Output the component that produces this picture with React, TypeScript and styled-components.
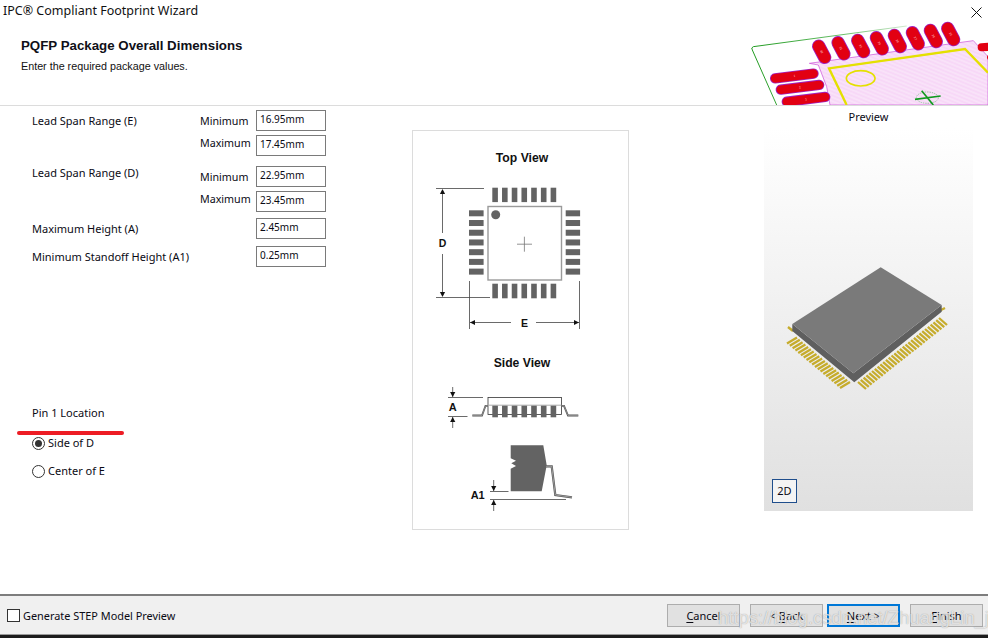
import React from 'react'
import styled, { createGlobalStyle } from 'styled-components'

const GlobalStyle = createGlobalStyle`
  html, body { margin: 0; padding: 0; background: #fff; }
  * { box-sizing: border-box; }
`

const Wizard = styled.div`
  position: relative;
  width: 988px;
  height: 638px;
  display: flex;
  flex-direction: column;
  overflow: hidden;
  background: #fff;
  color: #0a0a14;
  font-family: "Noto Sans", sans-serif;
  font-size: 11px;
`

const Header = styled.header`
  position: relative;
  height: 106px;
  flex: none;
  border-bottom: 1px solid #dcdcdc;
  overflow: hidden;
`

const WindowTitle = styled.div`
  padding: 2px 0 0 3px;
  height: 21px;
  font-size: 12.5px;
  line-height: 18px;
  color: #111;
`

const Heading = styled.h1`
  margin: 17px 0 0 21px;
  font: bold 13.3px/16px "Liberation Sans", Arial, sans-serif;
  color: #101018;
`

const SubHeading = styled.p`
  margin: 6px 0 0 21px;
  font: 10.75px/13px "Liberation Sans", Arial, sans-serif;
  color: #111;
`

const CloseButton = styled.svg`
  position: absolute;
  top: 7px;
  right: 6px;
  width: 11px;
  height: 11px;
`

const HeaderArt = styled.svg`
  position: absolute;
  top: 0;
  right: 0;
  width: 288px;
  height: 105px;
`

const Body = styled.main`
  flex: 1;
  display: grid;
  grid-template-columns: 412px 352px 224px;
  min-height: 0;
`

const FormColumn = styled.section`
  display: flex;
  flex-direction: column;
  padding: 4px 0 0 32px;
`

const Field = styled.div<{ $gap: number }>`
  display: grid;
  grid-template-columns: 168px 56px 70px;
  height: 21px;
  margin-bottom: ${({ $gap }) => $gap}px;
  align-items: center;
  line-height: 14px;
`

const FieldLabel = styled.span<{ $up?: number }>`
  grid-column: 1;
  white-space: nowrap;
  transform: translateY(${({ $up }) => -($up ?? 0)}px);
`

const BoundLabel = styled.span<{ $up?: number }>`
  grid-column: 2;
  font-size: 10.7px;
  white-space: nowrap;
  transform: translateY(${({ $up }) => -($up ?? 0)}px);
`

const ValueBox = styled.div`
  grid-column: 3;
  height: 21px;
  border: 1px solid #7a7a7a;
  padding-left: 3px;
  font-size: 10px;
  line-height: 17px;
  background: #fff;
`

const PinSection = styled.div`
  display: flex;
  flex-direction: column;
  margin-top: 139px;
`

const PinTitle = styled.div`
  line-height: 14px;
  margin-bottom: 16px;
`

const RadioRow = styled.label`
  display: flex;
  align-items: center;
  gap: 3px;
  height: 14px;
  margin-bottom: 14px;
  line-height: 14px;
`

const RadioDot = styled.span<{ $checked?: boolean }>`
  width: 13px;
  height: 13px;
  border-radius: 50%;
  border: 1px solid #333;
  display: flex;
  align-items: center;
  justify-content: center;
  &::after {
    content: '';
    width: 7px;
    height: 7px;
    border-radius: 50%;
    background: ${({ $checked }) => ($checked ? '#333' : 'transparent')};
  }
`

const RedMark = styled.div`
  position: absolute;
  left: 17px;
  top: 431px;
  width: 107px;
  height: 4px;
  border-radius: 2px;
  background: #ed1c24;
`

const DiagramColumn = styled.section`
  padding-top: 24px;
`

const DiagramCard = styled.svg`
  display: block;
  width: 217px;
  height: 400px;
  border: 1px solid #dcdcdc;
`

const PreviewColumn = styled.section`
  display: flex;
  flex-direction: column;
`

const PreviewTitle = styled.div`
  width: 209px;
  text-align: center;
  line-height: 14px;
  padding-top: 4px;
  height: 22px;
`

const PreviewPane = styled.div`
  position: relative;
  width: 209px;
  height: 383px;
  background: linear-gradient(#ffffff 0%, #e0e0e0 100%);
`

const ChipArt = styled.svg`
  display: block;
  width: 209px;
  height: 383px;
`

const ToggleButton = styled.div`
  position: absolute;
  left: 8px;
  bottom: 8px;
  width: 25px;
  height: 24px;
  border: 1px solid #1f4e8c;
  background: #f4f4f4;
  text-align: center;
  line-height: 22px;
`

const Footer = styled.footer`
  flex: none;
  height: 44px;
  margin-top: -1px;
  display: flex;
  align-items: center;
  justify-content: space-between;
  padding: 0 5px 0 7px;
  background: #f0f0f0;
  border-top: 2px solid #7d7d7d;
  border-bottom: 3px solid #1c1c1c;
  box-shadow: inset 0 -1px 0 #9a9a9a;
`

const StepOption = styled.label`
  display: flex;
  align-items: center;
  gap: 3px;
  font-size: 10.9px;
  line-height: 14px;
`

const CheckBox = styled.span`
  width: 13px;
  height: 13px;
  border: 1px solid #333;
  background: #fff;
`

const ButtonRow = styled.div`
  display: flex;
`

const WizardButton = styled.div<{ $active?: boolean; $gap?: number }>`
  width: 73px;
  height: 23px;
  margin-left: ${({ $gap }) => $gap ?? 0}px;
  text-align: center;
  line-height: ${({ $active }) => ($active ? 19 : 21)}px;
  background: #e1e1e1;
  border: ${({ $active }) => ($active ? '2px solid #0078d7' : '1px solid #adadad')};
  u { text-underline-offset: 2px; }
`

const Watermark = styled.div`
  position: absolute;
  left: 718px;
  top: 606px;
  font: 18.4px/24px "Liberation Sans", Arial, sans-serif;
  color: rgba(255, 255, 255, 0.7);
  text-shadow: 0 0 1px rgba(90, 90, 90, 0.6);
  white-space: nowrap;
  pointer-events: none;
`

const pitch = 9.72
const padIndexes = [0, 1, 2, 3, 4, 5, 6]

const DIAGRAM_FONT = '"Liberation Sans", Arial, sans-serif'

const Arrow = ({ x, y, dir }: { x: number; y: number; dir: 'u' | 'd' | 'l' | 'r' }) => {
  const s = 5
  const w = 2.6
  const pts = {
    u: `${x},${y} ${x - w},${y + s} ${x + w},${y + s}`,
    d: `${x},${y} ${x - w},${y - s} ${x + w},${y - s}`,
    l: `${x},${y} ${x + s},${y - w} ${x + s},${y + w}`,
    r: `${x},${y} ${x - s},${y - w} ${x - s},${y + w}`,
  }[dir]
  return <polygon points={pts} fill="#111" />
}

const PackageDiagram = () => (
  <DiagramCard viewBox="413 131 215 398">
    <g fontFamily={DIAGRAM_FONT} fontWeight="bold" fill="#111" textAnchor="middle">
      <text x="522" y="162" fontSize="12.2">Top View</text>
      <text x="522" y="367" fontSize="12.2">Side View</text>
      <text x="442.5" y="247" fontSize="10.5">D</text>
      <text x="524.5" y="327" fontSize="10.5">E</text>
      <text x="452.7" y="410.500" fontSize="11">A</text>
      <text x="477.7" y="499" fontSize="11">A1</text>
    </g>

    {padIndexes.map(i => (
      <g key={i} fill="#636363">
        <rect x={492.3 + i * pitch} y="187.7" width="5.6" height="14.4" />
        <rect x={492.3 + i * pitch} y="283.7" width="5.6" height="14.6" />
        <rect x="469" y={210.3 + i * pitch} width="14.6" height="6" />
        <rect x="565.7" y={210.3 + i * pitch} width="14.4" height="6" />
      </g>
    ))}
    <rect x="488" y="206.5" width="73.5" height="73.5" fill="#fff" stroke="#9a9a9a" strokeWidth="1.4" />
    <circle cx="495.7" cy="214.7" r="4.5" fill="#636363" />
    <path d="M524.4 236.7V251.7M517 244.2H532" stroke="#777" strokeWidth="0.8" fill="none" />

    <g stroke="#444" strokeWidth="0.8" fill="none">
      <path d="M436 188.5H484M436 297.5H490M442.5 190V233M442.5 254V296" />
      <path d="M469.5 281V329M579.5 281V329M470 322.5H511M536 322.5H579" />
      <path d="M448 397.5H483M448 416.5H467.5M452.7 387V397M452.7 417V428" />
      <path d="M490 491.5H508.5M490 499.5H566M493.7 480V491M493.7 500V511" />
    </g>
    <Arrow x={442.5} y={189} dir="u" />
    <Arrow x={442.5} y={297} dir="d" />
    <Arrow x={470} y={322.5} dir="l" />
    <Arrow x={579} y={322.5} dir="r" />
    <Arrow x={452.7} y={397} dir="d" />
    <Arrow x={452.7} y={417} dir="u" />
    <Arrow x={493.7} y={491} dir="d" />
    <Arrow x={493.7} y={500} dir="u" />

    <rect x="488" y="397.5" width="73.5" height="17" fill="#fff" stroke="#333" strokeWidth="0.8" />
    <path d="M488 405.2H561.5" stroke="#aaa" strokeWidth="1" />
    {padIndexes.map(i => (
      <rect key={i} x={492.3 + i * pitch} y="405.7" width="5.6" height="11.6" fill="#636363" />
    ))}
    <g fill="none" strokeLinejoin="miter">
      <path d="M472.3 415.5H482L485.5 405.8H488M561.5 405.8H564L568 415.5H578.3" stroke="#555" strokeWidth="1.8" />
      <path d="M472.3 415.5H482L485.5 405.8H488M561.5 405.8H564L568 415.5H578.3" stroke="#bbb" strokeWidth="0.5" />
    </g>

    <polygon
      points="510.7,445.3 543.3,445.3 546.7,465.3 541.7,491.3 510.7,491.3 510.7,468.7 516,466 511.3,463.3 516,460.7 510.7,458.3"
      fill="#636363"
    />
    <path d="M546 466.3H551.7L555.3 495L572 497.3" fill="none" stroke="#555" strokeWidth="2.2" />
    <path d="M546 466.3H551.7L555.3 495L572 497.3" fill="none" stroke="#ccc" strokeWidth="0.6" />
  </DiagramCard>
)

const headerPads = [
  [365, 155, '32'], [423, 145, '31'], [482, 138, '30'], [538, 130, '29'],
  [592, 123, '28'], [646, 115, '27'], [700, 108, '26'], [752, 102, '25'],
] as const

const sidePads = [
  [283, 228, '1'], [300, 262, '2'], [318, 298, '3'],
] as const

const BoardPreview = () => (
  <HeaderArt viewBox="0 0 864 315">
    <defs>
      <pattern id="hatch" width="4" height="4" patternUnits="userSpaceOnUse" patternTransform="rotate(-8)">
        <rect width="4" height="4" fill="#f7d6f7" />
        <rect width="4" height="1.4" fill="#fbeafb" />
      </pattern>
      <linearGradient id="edgeFade" x1="0" x2="1" y1="0" y2="0">
        <stop offset="0" stopColor="#1f9a1f" />
        <stop offset="0.6" stopColor="#6cc06c" />
        <stop offset="1" stopColor="#cfe8cf" />
      </linearGradient>
    </defs>
    <path d="M620 78L160 140Q152 143 157 150L230 315" fill="none" stroke="url(#edgeFade)" strokeWidth="3" />
    <polygon points="328,190 820,122 864,170 864,315 390,315 380,260 355,195" fill="url(#hatch)" stroke="#c848d8" strokeWidth="2" />
    {headerPads.map(([cx, cy, n]) => (
      <g key={n} transform={`translate(${cx} ${cy}) rotate(62)`}>
        <line x1="-19" x2="19" y1="0" y2="0" stroke="#a020c0" strokeWidth="40" strokeLinecap="round" />
        <line x1="-19" x2="19" y1="0" y2="0" stroke="#e20012" strokeWidth="35" strokeLinecap="round" />
        <text x="0" y="3" fontSize="9" fill="#ffd8d8" textAnchor="middle" fontFamily={DIAGRAM_FONT}>{n}</text>
      </g>
    ))}
    {sidePads.map(([cx, cy, n]) => (
      <g key={n} transform={`translate(${cx} ${cy}) rotate(-7)`}>
        <line x1="-58" x2="58" y1="0" y2="0" stroke="#a020c0" strokeWidth="31" strokeLinecap="round" />
        <line x1="-58" x2="58" y1="0" y2="0" stroke="#e20012" strokeWidth="26" strokeLinecap="round" />
        <text x="0" y="3" fontSize="9" fill="#ffd8d8" textAnchor="middle" fontFamily={DIAGRAM_FONT}>{n}</text>
      </g>
    ))}
    <line x1="845" x2="900" y1="142" y2="138" stroke="#e20012" strokeWidth="24" strokeLinecap="round" />
    <line x1="870" x2="900" y1="172" y2="168" stroke="#e20012" strokeWidth="18" strokeLinecap="round" />
    <path d="M440 315L387 205L795 147L864 218" fill="none" stroke="#e4e000" strokeWidth="7" />
    <ellipse cx="482" cy="235" rx="43" ry="23" fill="none" stroke="#e4e000" strokeWidth="5" />
    <g stroke="#109a20" fill="none">
      <ellipse cx="682" cy="293" rx="33" ry="17" strokeWidth="2" opacity="0.6" strokeDasharray="4 3" />
      <path d="M645 298L722 288M665 272L700 315" strokeWidth="5" />
    </g>
  </HeaderArt>
)

// pins of the 3D preview, in pane coordinates
const pinRow = (x0: number, y0: number, x1: number, y1: number, dx: number, dy: number, n: number) =>
  Array.from({ length: n }, (_, i) => {
    const t = i / (n - 1)
    const x = x0 + (x1 - x0) * t
    const y = y0 + (y1 - y0) * t
    return `M${x.toFixed(1)} ${y.toFixed(1)}l${dx} ${dy}`
  }).join('')

const ChipPreview = () => (
  <ChipArt viewBox="764 128 209 383">
    <path d={pinRow(787, 343.5, 840, 388, 10, -6, 20)} stroke="#c6ac2c" strokeWidth="2.3" fill="none" />
    <path d={pinRow(858, 382, 939, 318, 8, 7, 30)} stroke="#c6ac2c" strokeWidth="2.3" fill="none" />
    <path d="M788 327l5 4M940 310.500l5 -2.500" stroke="#c6ac2c" strokeWidth="2.400" fill="none" />
    <polygon points="792.3,324 853.3,373.300 941.700,305 941.700,311.700 854.300,382.300 792.300,331" fill="#5f5f5f" />
    <polygon points="880.700,267.300 941.700,305 853.300,373.300 792.300,324" fill="#7a7a7a" />
  </ChipArt>
)

export default function App() {
  return (
    <Wizard>
      <GlobalStyle />
      <Header>
        <BoardPreview />
        <WindowTitle>IPC® Compliant Footprint Wizard</WindowTitle>
        <Heading>PQFP Package Overall Dimensions</Heading>
        <SubHeading>Enter the required package values.</SubHeading>
        <CloseButton viewBox="0 0 11 11">
          <path d="M.5 .5L10.500 10.500M10.500 .5L.5 10.500" stroke="#111" strokeWidth="1" fill="none" />
        </CloseButton>
      </Header>

      <Body>
        <FormColumn>
          <Field $gap={4}>
            <FieldLabel>Lead Span Range (E)</FieldLabel>
            <BoundLabel>Minimum</BoundLabel>
            <ValueBox>16.95mm</ValueBox>
          </Field>
          <Field $gap={10}>
            <BoundLabel $up={3}>Maximum</BoundLabel>
            <ValueBox>17.45mm</ValueBox>
          </Field>
          <Field $gap={4}>
            <FieldLabel $up={4}>Lead Span Range (D)</FieldLabel>
            <BoundLabel>Minimum</BoundLabel>
            <ValueBox>22.95mm</ValueBox>
          </Field>
          <Field $gap={6}>
            <BoundLabel $up={3}>Maximum</BoundLabel>
            <ValueBox>23.45mm</ValueBox>
          </Field>
          <Field $gap={7}>
            <FieldLabel>Maximum Height (A)</FieldLabel>
            <ValueBox>2.45mm</ValueBox>
          </Field>
          <Field $gap={0}>
            <FieldLabel>Minimum Standoff Height (A1)</FieldLabel>
            <ValueBox>0.25mm</ValueBox>
          </Field>

          <PinSection>
            <PinTitle>Pin 1 Location</PinTitle>
            <RadioRow><RadioDot $checked />Side of D</RadioRow>
            <RadioRow><RadioDot />Center of E</RadioRow>
          </PinSection>
        </FormColumn>

        <DiagramColumn>
          <PackageDiagram />
        </DiagramColumn>

        <PreviewColumn>
          <PreviewTitle>Preview</PreviewTitle>
          <PreviewPane>
            <ChipPreview />
            <ToggleButton>2D</ToggleButton>
          </PreviewPane>
        </PreviewColumn>
      </Body>

      <Footer>
        <StepOption><CheckBox />Generate STEP Model Preview</StepOption>
        <ButtonRow>
          <WizardButton><u>C</u>ancel</WizardButton>
          <WizardButton $gap={10}>&lt; <u>B</u>ack</WizardButton>
          <WizardButton $gap={4} $active><u>N</u>ext &gt;</WizardButton>
          <WizardButton $gap={10}><u>F</u>inish</WizardButton>
        </ButtonRow>
      </Footer>

      <RedMark />
      <Watermark>https://blog.csdn.net/ZhuangLin_jian</Watermark>
    </Wizard>
  )
}
